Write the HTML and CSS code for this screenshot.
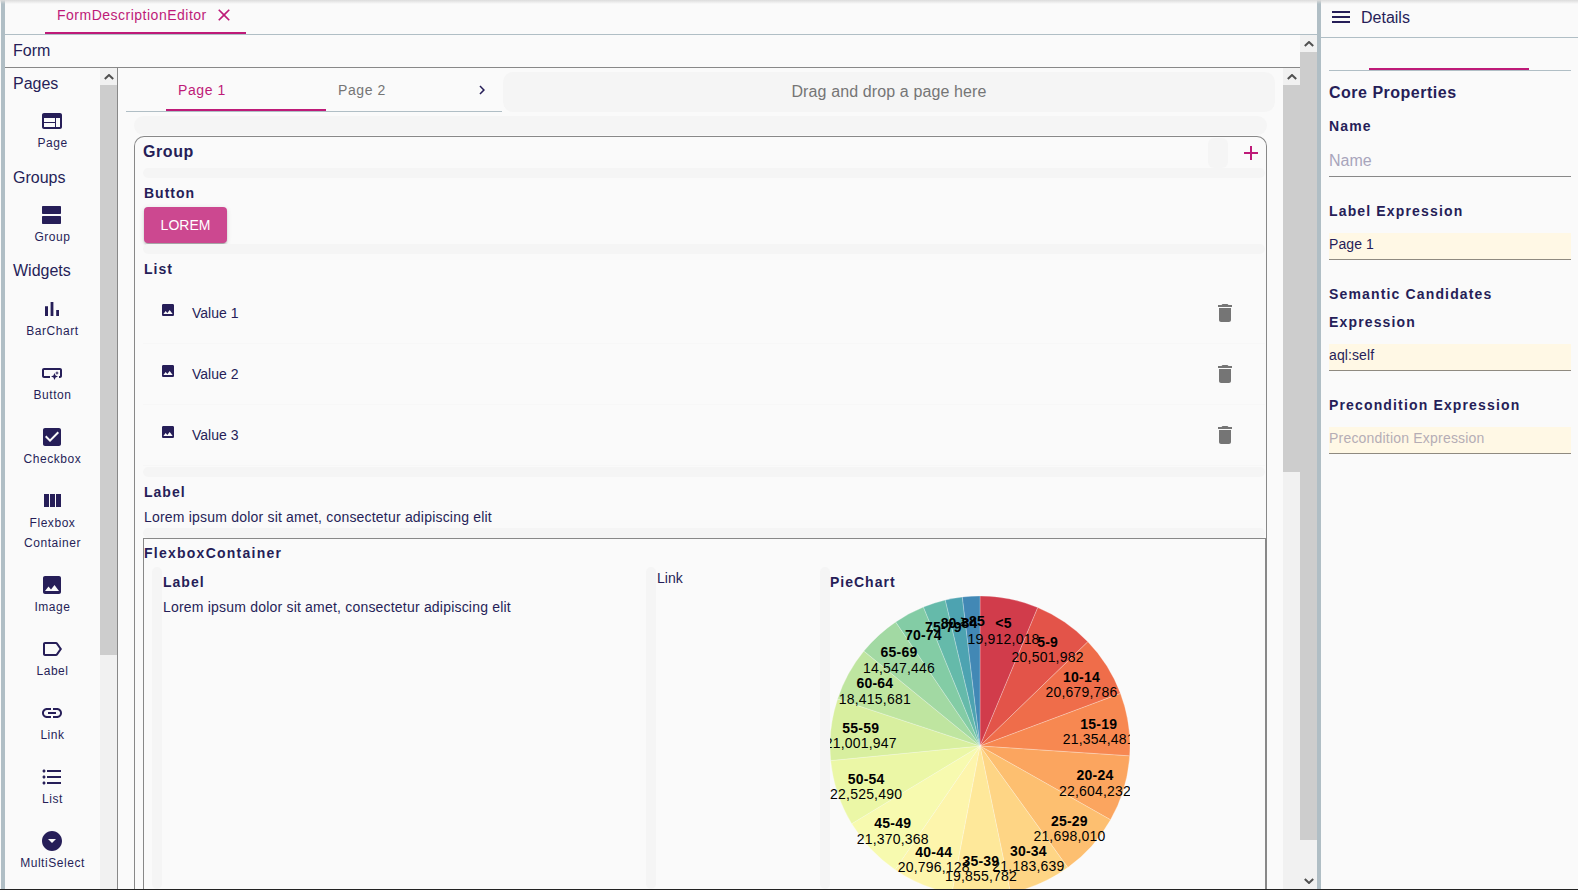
FILE: index.html
```html
<!DOCTYPE html>
<html lang="en">
<head>
<meta charset="utf-8">
<title>FormDescriptionEditor</title>
<link rel="stylesheet" href="styles.css">
</head>
<body>
<div class="app">
  <div class="editor">
    <div class="editor-tabs">
      <div class="editor-tab">
        <span>FormDescriptionEditor</span>
        <svg class="close-icon" viewBox="0 0 24 24"><path d="M19 6.41L17.59 5 12 10.59 6.41 5 5 6.41 10.59 12 5 17.59 6.41 19 12 13.41 17.59 19 19 17.59 13.41 12z"/></svg>
      </div>
    </div>
    <div class="editor-body">
      <div class="form-col">
        <div class="form-title">Form</div>
        <div class="form-row">
          <aside class="palette">
            <div class="palette-list">
              <div class="palette-title nudge">Pages</div>
              <div class="palette-item"><svg class="icon" viewBox="0 0 24 24"><path d="M20 4H4c-1.1 0-1.99.9-1.99 2L2 18c0 1.1.9 2 2 2h16c1.1 0 2-.9 2-2V6c0-1.1-.9-2-2-2zm-5 14H4v-4h11v4zm0-5H4V9h11v4zm5 5h-4V9h4v9z"/></svg><span>Page</span></div>
              <div class="palette-title nudge">Groups</div>
              <div class="palette-item"><svg class="icon" viewBox="0 0 24 24"><path d="M20 13H3c-.55 0-1 .45-1 1v6c0 .55.45 1 1 1h17c.55 0 1-.45 1-1v-6c0-.55-.45-1-1-1zm0-10H3c-.55 0-1 .45-1 1v6c0 .55.45 1 1 1h17c.55 0 1-.45 1-1V4c0-.55-.45-1-1-1z"/></svg><span>Group</span></div>
              <div class="palette-title">Widgets</div>
              <div class="palette-item"><svg class="icon" viewBox="0 0 24 24"><path d="M5 9.2h3V19H5zM10.6 5h2.8v14h-2.8zm5.6 8H19v6h-2.8z"/></svg><span>BarChart</span></div>
              <div class="palette-item"><svg class="icon" viewBox="0 0 24 24"><path d="M22 9v6c0 1.1-.9 2-2 2h-1v-2h1V9H4v6h6v2H4c-1.1 0-2-.9-2-2V9c0-1.1.9-2 2-2h16c1.1 0 2 .9 2 2zm-7.5 10 1.09-2.41L18 15.5l-2.41-1.09L14.5 12l-1.09 2.41L11 15.5l2.41 1.09L14.5 19zm2.5-5 .62-1.38L19 12l-1.38-.62L17 10l-.62 1.38L15 12l1.38.62L17 14z"/></svg><span>Button</span></div>
              <div class="palette-item"><svg class="icon" viewBox="0 0 24 24"><path d="M19 3H5c-1.11 0-2 .9-2 2v14c0 1.1.89 2 2 2h14c1.11 0 2-.9 2-2V5c0-1.1-.89-2-2-2zm-9 14l-5-5 1.41-1.41L10 14.17l7.59-7.59L19 8l-9 9z"/></svg><span>Checkbox</span></div>
              <div class="palette-item two-line"><svg class="icon" viewBox="0 0 24 24"><path d="M10 18h5V5h-5v13zm-6 0h5V5H4v13zM16 5v13h5V5h-5z"/></svg><span>Flexbox<br>Container</span></div>
              <div class="palette-item"><svg class="icon" viewBox="0 0 24 24"><path d="M21 19V5c0-1.1-.9-2-2-2H5c-1.1 0-2 .9-2 2v14c0 1.1.9 2 2 2h14c1.1 0 2-.9 2-2zM8.5 13.5l2.5 3.01L14.5 12l4.5 6H5l3.5-4.5z"/></svg><span>Image</span></div>
              <div class="palette-item"><svg class="icon" viewBox="0 0 24 24"><path d="M17.63 5.84C17.27 5.33 16.67 5 16 5L5 5.01C3.9 5.01 3 5.9 3 7v10c0 1.1.9 1.99 2 1.99L16 19c.67 0 1.27-.33 1.63-.84L22 12l-4.37-6.16zM16 17H5V7h11l3.55 5L16 17z"/></svg><span>Label</span></div>
              <div class="palette-item"><svg class="icon" viewBox="0 0 24 24"><path d="M3.9 12c0-1.71 1.39-3.1 3.1-3.1h4V7H7c-2.76 0-5 2.24-5 5s2.24 5 5 5h4v-1.9H7c-1.71 0-3.1-1.39-3.1-3.1zM8 13h8v-2H8v2zm9-6h-4v1.9h4c1.71 0 3.1 1.39 3.1 3.1s-1.39 3.1-3.1 3.1h-4V17h4c2.76 0 5-2.24 5-5s-2.24-5-5-5z"/></svg><span>Link</span></div>
              <div class="palette-item"><svg class="icon" viewBox="0 0 24 24"><path d="M4 10.5c-.83 0-1.5.67-1.5 1.5s.67 1.5 1.5 1.5 1.5-.67 1.5-1.5-.67-1.5-1.5-1.5zm0-6c-.83 0-1.5.67-1.5 1.5S3.17 7.5 4 7.5 5.5 6.83 5.5 6 4.83 4.5 4 4.5zm0 12c-.83 0-1.5.68-1.5 1.5s.68 1.5 1.5 1.5 1.5-.68 1.5-1.5-.67-1.5-1.5-1.5zM7 19h14v-2H7v2zm0-6h14v-2H7v2zm0-8v2h14V5H7z"/></svg><span>List</span></div>
              <div class="palette-item"><svg class="icon" viewBox="0 0 24 24"><path d="M12 2C6.48 2 2 6.48 2 12s4.48 10 10 10 10-4.48 10-10S17.52 2 12 2zm0 12l-4-4h8l-4 4z"/></svg><span>MultiSelect</span></div>
            </div>
            <div class="scrollbar">
              <div class="sb-btn"><svg viewBox="0 0 10 6"><path d="M0.8 5 5 1l4.2 4"/></svg></div>
              <div class="sb-thumb thumb-palette"></div>
            </div>
          </aside>
          <main class="main">
            <div class="main-content">
              <div class="page-bar">
                <div class="page-tabs">
                  <div class="page-tab active">Page 1</div>
                  <div class="page-tab">Page 2</div>
                  <svg class="tab-next" viewBox="0 0 24 24"><path d="M10 6L8.59 7.41 13.17 12l-4.58 4.59L10 18l6-6z"/></svg>
                </div>
                <div class="page-drop">Drag and drop a page here</div>
              </div>
              <div class="drop drop-page"></div>
              <section class="group">
                <div class="group-head">
                  <div class="group-title">Group</div>
                  <div class="drop-head"></div>
                  <svg class="add-icon" viewBox="0 0 24 24"><path d="M19 13h-6v6h-2v-6H5v-2h6V5h2v6h6v2z"/></svg>
                </div>
                <div class="drop drop-bar"></div>
                <div class="w-label">Button</div>
                <div class="lorem-btn">LOREM</div>
                <div class="drop drop-bar drop-after-btn"></div>
                <div class="w-label">List</div>
                <div class="list">
                  <div class="list-row">
                    <svg class="row-image" viewBox="0 0 24 24"><path d="M21 19V5c0-1.1-.9-2-2-2H5c-1.1 0-2 .9-2 2v14c0 1.1.9 2 2 2h14c1.1 0 2-.9 2-2zM8.5 13.5l2.5 3.01L14.5 12l4.5 6H5l3.5-4.5z"/></svg>
                    <span class="row-text">Value 1</span>
                    <svg class="row-delete" viewBox="0 0 24 24"><path d="M6 19c0 1.1.9 2 2 2h8c1.1 0 2-.9 2-2V7H6v12zM19 4h-3.5l-1-1h-5l-1 1H5v2h14V4z"/></svg>
                  </div>
                  <div class="list-row">
                    <svg class="row-image" viewBox="0 0 24 24"><path d="M21 19V5c0-1.1-.9-2-2-2H5c-1.1 0-2 .9-2 2v14c0 1.1.9 2 2 2h14c1.1 0 2-.9 2-2zM8.5 13.5l2.5 3.01L14.5 12l4.5 6H5l3.5-4.5z"/></svg>
                    <span class="row-text">Value 2</span>
                    <svg class="row-delete" viewBox="0 0 24 24"><path d="M6 19c0 1.1.9 2 2 2h8c1.1 0 2-.9 2-2V7H6v12zM19 4h-3.5l-1-1h-5l-1 1H5v2h14V4z"/></svg>
                  </div>
                  <div class="list-row">
                    <svg class="row-image" viewBox="0 0 24 24"><path d="M21 19V5c0-1.1-.9-2-2-2H5c-1.1 0-2 .9-2 2v14c0 1.1.9 2 2 2h14c1.1 0 2-.9 2-2zM8.5 13.5l2.5 3.01L14.5 12l4.5 6H5l3.5-4.5z"/></svg>
                    <span class="row-text">Value 3</span>
                    <svg class="row-delete" viewBox="0 0 24 24"><path d="M6 19c0 1.1.9 2 2 2h8c1.1 0 2-.9 2-2V7H6v12zM19 4h-3.5l-1-1h-5l-1 1H5v2h14V4z"/></svg>
                  </div>
                </div>
                <div class="drop drop-bar drop-after-list"></div>
                <div class="w-label">Label</div>
                <div class="w-text">Lorem ipsum dolor sit amet, consectetur adipiscing elit</div>
                <div class="drop drop-bar drop-tight"></div>
                <div class="flexbox">
                  <div class="w-label flex-title">FlexboxContainer</div>
                  <div class="flex-cols">
                    <div class="drop col-drop"></div>
                    <div class="flex-col col-label">
                      <div class="w-label">Label</div>
                      <div class="w-text">Lorem ipsum dolor sit amet, consectetur adipiscing elit</div>
                    </div>
                    <div class="drop col-drop"></div>
                    <div class="flex-col col-link">Link</div>
                    <div class="drop col-drop"></div>
                    <div class="flex-col col-pie">
                      <div class="w-label pie-title">PieChart</div>
                      <svg id="pie" class="pie" viewBox="-150 -150 300 300" width="300" height="300"></svg>
                    </div>
                  </div>
                </div>
              </section>
            </div>
            <div class="scrollbar">
              <div class="sb-btn"><svg viewBox="0 0 10 6"><path d="M0.8 5 5 1l4.2 4"/></svg></div>
              <div class="sb-thumb thumb-main"></div>
            </div>
          </main>
        </div>
      </div>
      <div class="scrollbar">
        <div class="sb-btn"><svg viewBox="0 0 10 6"><path d="M0.8 5 5 1l4.2 4"/></svg></div>
        <div class="sb-thumb thumb-outer"></div>
        <div class="sb-fill"></div>
        <div class="sb-btn"><svg viewBox="0 0 10 6"><path d="M0.8 1 5 5l4.2-4"/></svg></div>
      </div>
    </div>
  </div>
  <aside class="details">
    <div class="details-head">
      <svg class="icon" viewBox="0 0 24 24"><path d="M3 18h18v-2H3v2zm0-5h18v-2H3v2zm0-7v2h18V6H3z"/></svg>
      <span>Details</span>
    </div>
    <div class="details-body">
      <div class="details-tabs"><div class="details-tab"></div></div>
      <div class="core-title">Core Properties</div>
      <div class="field-label first">Name</div>
      <div class="input-plain">Name</div>
      <div class="field-label">Label Expression</div>
      <div class="input-expr">Page 1</div>
      <div class="field-label wrap">Semantic Candidates Expression</div>
      <div class="input-expr tight">aql:self</div>
      <div class="field-label">Precondition Expression</div>
      <div class="input-expr empty">Precondition Expression</div>
    </div>
  </aside>
</div>
<script src="pie.js"></script>
</body>
</html>
```
FILE: styles.css
```css
* { box-sizing: border-box; }
html, body { margin: 0; height: 100%; overflow: hidden; }
body {
  background: #fafafa;
  color: #261e58;
  font-family: "Liberation Sans", Arial, sans-serif;
  font-size: 14px;
}
.app {
  position: relative;
  display: flex;
  height: 890px;
  padding-left: 1px;
  border-bottom: 1px solid #222;
  overflow: hidden;
}
.app::before {
  content: "";
  position: absolute;
  inset: 0 0 auto 0;
  height: 4px;
  background: linear-gradient(#dcdcdc, rgba(250, 250, 250, 0));
  z-index: 3;
}
.icon { width: 24px; height: 24px; fill: #261e58; display: block; flex: none; }

/* editor */
.editor {
  width: 1320px;
  flex: none;
  display: flex;
  flex-direction: column;
  border-left: 4px solid #b0bec5;
  border-right: 4px solid #b0bec5;
  min-height: 0;
}
.editor-tabs { height: 35px; flex: none; padding-left: 40px; border-bottom: 1px solid #b0bec5; }
.editor-tab {
  width: 201px;
  height: 34px;
  padding: 0 0 2px 12px;
  display: flex;
  align-items: center;
  gap: 7px;
  color: #be1a78;
  letter-spacing: 0.5px;
  border-bottom: 2px solid #be1a78;
}
.close-icon { width: 20px; height: 20px; fill: #be1a78; }
.editor-body { flex: 1; display: flex; min-height: 0; }
.form-col { flex: 1; min-width: 0; display: flex; flex-direction: column; }
.form-title {
  height: 33px;
  flex: none;
  padding: 4px 0 0 8px;
  font-size: 16px;
  line-height: 24px;
  border-bottom: 1px solid #888;
}
.form-row { flex: 1; min-height: 0; display: flex; }

/* scrollbars */
.scrollbar { width: 17px; flex: none; display: flex; flex-direction: column; background: #f1f1f1; }
.sb-btn { height: 17px; flex: none; display: flex; align-items: center; justify-content: center; }
.sb-btn svg { width: 10px; height: 6px; fill: none; stroke: #505050; stroke-width: 2; }
.sb-thumb { background: #cdcdcd; flex: none; }
.thumb-palette { height: 570px; }
.thumb-main { height: 387px; }
.thumb-outer { height: 788px; }
.sb-fill { flex: 1; }

/* palette */
.palette { width: 113px; flex: none; display: flex; border-right: 1px solid #888; }
.palette-list { flex: 1; min-width: 0; padding-top: 3px; overflow: hidden; }
.palette-title { padding-left: 8px; font-size: 16px; line-height: 24px; margin-bottom: 14px; }
.palette-title.nudge { padding-top: 1px; margin-bottom: 13px; }
.palette-item {
  display: flex;
  flex-direction: column;
  align-items: center;
  text-align: center;
  margin-bottom: 19px;
  font-size: 12px;
  line-height: 19.92px;
  letter-spacing: 0.55px;
}
.palette-item .icon { margin-right: 1px; }
.palette-item span { padding-top: 1px; }
.palette-item.two-line { margin-bottom: 20px; }
.palette-item + .palette-title { margin-top: -8px; }

/* main */
.main { flex: 1; min-width: 0; display: flex; }
.main-content { flex: 1; min-width: 0; padding: 0 8px; display: flex; flex-direction: column; }
.page-bar { height: 44px; flex: none; display: flex; }
.page-tabs {
  position: relative;
  width: 376px;
  flex: none;
  padding-left: 40px;
  display: flex;
  border-bottom: 1px solid #b0bec5;
  overflow: hidden;
}
.page-tab {
  width: 160px;
  flex: none;
  padding: 14px 0 0 12px;
  line-height: 17px;
  letter-spacing: 0.6px;
  color: #757575;
}
.page-tab.active { color: #be1a78; border-bottom: 2px solid #be1a78; }
.tab-next { position: absolute; right: 11px; top: 13px; width: 18px; height: 18px; fill: #261e58; }
.page-drop {
  flex: 1;
  margin: 4px 0 0 1px;
  border-radius: 10px;
  background: #f5f5f5;
  color: #757575;
  font-size: 16px;
  letter-spacing: 0.12px;
  line-height: 40px;
  text-align: center;
}
.drop { background: #f5f5f5; border-radius: 10px; flex: none; }
.drop-page { height: 19px; margin: 4px 8px 1px; }
.group {
  flex: 1;
  min-height: 0;
  margin: 0 8px;
  padding: 0 1px 0 8px;
  border: 1px solid #888;
  border-bottom: 0;
  border-radius: 10px 10px 0 0;
  display: flex;
  flex-direction: column;
}
.group-head { height: 31px; flex: none; display: flex; }
.group-title { flex: 1; font-size: 16px; font-weight: 700; letter-spacing: 0.6px; line-height: 30px; }
.drop-head { width: 20px; height: 30px; margin: 1px 11px 0 0; border-radius: 6px; background: #f5f5f5; }
.add-icon { width: 24px; height: 24px; fill: #be1a78; margin: 4px 2px 0 0; }
.drop-bar { height: 10px; }
.w-label { height: 20px; margin-top: 5px; padding-left: 1px; font-weight: 700; letter-spacing: 1px; line-height: 20px; flex: none; }
.lorem-btn {
  width: 83px;
  height: 36px;
  margin: 4px 0 0 1px;
  flex: none;
  border-radius: 4px;
  background: #cc4890;
  color: #fff;
  line-height: 36px;
  text-align: center;
  box-shadow: 0 3px 1px -2px rgba(0,0,0,.2), 0 2px 2px 0 rgba(0,0,0,.14), 0 1px 5px 0 rgba(0,0,0,.12);
}
.drop-after-btn { margin-top: 1px; }
.list { margin-top: 4px; flex: none; }
.list-row { height: 61px; display: flex; align-items: center; padding: 0 28px 0 17px; border-bottom: 1px solid #f7f7f7; }
.row-image { width: 16px; height: 16px; fill: #261e58; margin-bottom: 6px; flex: none; }
.row-text { flex: 1; margin-left: 16px; }
.row-delete { width: 24px; height: 24px; fill: #757575; flex: none; }
.drop-after-list { margin-top: 1px; }
.w-text { height: 22px; margin-top: 4px; padding-left: 1px; line-height: 22px; flex: none; letter-spacing: 0.2px; white-space: nowrap; }
.flexbox { flex: 1; min-height: 0; border: 1px solid #888; border-bottom: 0; display: flex; flex-direction: column; margin-right: -1px; }
.flex-title { margin-top: 4px; padding-left: 0; letter-spacing: 1.25px; }
.flex-cols { flex: 1; min-height: 0; margin-top: 4px; display: flex; padding-left: 8px; }
.col-drop { width: 10px; }
.flex-col { flex: none; }
.col-label { width: 484px; }
.col-label .w-label { margin-top: 5px; }
.col-link { width: 164px; padding: 0 0 0 1px; line-height: 22px; }
.col-pie { width: 320px; }
.pie-title { margin-top: 5px; padding-left: 0; }
.pie { display: block; margin-top: 4px; overflow: hidden; }
.pie text { font-family: "Liberation Sans", Arial, sans-serif; font-size: 14px; fill: #000; text-anchor: middle; letter-spacing: 0.2px; }
.pie .name { font-weight: 700; }

/* details */
.details { flex: 1; min-width: 0; display: flex; flex-direction: column; }
.details-head {
  height: 38px;
  flex: none;
  padding: 5px 0 0 8px;
  display: flex;
  align-items: flex-start;
  gap: 8px;
  font-size: 16px;
  line-height: 24px;
  border-bottom: 1px solid #b0bec5;
}
.details-head span { padding-top: 1px; }
.details-body { padding: 0 7px 0 8px; }
.details-tabs { height: 33px; padding: 30px 0 0 40px; border-bottom: 1px solid #b0bec5; }
.details-tab { width: 160px; height: 2px; background: #be1a78; }
.core-title { margin-top: 10px; font-size: 16px; font-weight: 700; letter-spacing: 0.5px; line-height: 24px; }
.field-label { margin-top: 24px; font-weight: 700; letter-spacing: 1.15px; line-height: 20px; }
.field-label.first { margin-top: 11px; }
.field-label.wrap { margin-top: 20px; line-height: 28px; width: 190px; }
.input-plain { height: 41px; padding-top: 14px; font-size: 16px; line-height: 22px; color: #a8a5bc; border-bottom: 1px solid #888; }
.input-expr { height: 27px; margin-top: 12px; padding-top: 0; line-height: 22px; letter-spacing: 0.1px; background: #fff8e5; border-bottom: 1px solid #8f8a80; }
.input-expr.tight { margin-top: 8px; }
.input-expr.empty { color: #b5adb5; letter-spacing: 0.2px; }
```
FILE: pie.js
```js
(function () {
  var data = [
    ["<5", 19912018], ["5-9", 20501982], ["10-14", 20679786], ["15-19", 21354481],
    ["20-24", 22604232], ["25-29", 21698010], ["30-34", 21183639], ["35-39", 19855782],
    ["40-44", 20796128], ["45-49", 21370368], ["50-54", 22525490], ["55-59", 21001947],
    ["60-64", 18415681], ["65-69", 14547446], ["70-74", 10587721], ["75-79", 7730129],
    ["80-84", 5811429], ["\u226585", 5938960]
  ];
  var scheme = ["9e0142", "d53e4f", "f46d43", "fdae61", "fee08b", "ffffbf", "e6f598", "abdda4", "66c2a5", "3288bd", "5e4fa2"];
  var channels = [0, 2, 4].map(function (o) {
    return scheme.map(function (h) { return parseInt(h.substr(o, 2), 16); });
  });
  function basis(values, t) {
    var n = values.length - 1;
    var i = t >= 1 ? n - 1 : Math.floor(t * n);
    var v1 = values[i], v2 = values[i + 1];
    var v0 = i > 0 ? values[i - 1] : 2 * v1 - v2;
    var v3 = i < n - 1 ? values[i + 2] : 2 * v2 - v1;
    var t1 = (t - i / n) * n, t2 = t1 * t1, t3 = t2 * t1;
    return ((1 - 3 * t1 + 3 * t2 - t3) * v0 + (4 - 6 * t2 + 3 * t3) * v1 +
      (1 + 3 * t1 + 3 * t2 - 3 * t3) * v2 + t3 * v3) / 6;
  }
  function spectral(t) {
    return "rgb(" + channels.map(function (c) {
      return Math.max(0, Math.min(255, Math.round(basis(c, t))));
    }).join(",") + ")";
  }
  var NS = "http://www.w3.org/2000/svg";
  var svg = document.getElementById("pie");
  var total = data.reduce(function (s, d) { return s + d[1]; }, 0);
  var R = 150, LR = 120, a = 0, labels = [];
  data.forEach(function (d, i) {
    var span = d[1] / total * 2 * Math.PI, b = a + span, mid = a + span / 2;
    var p = document.createElementNS(NS, "path");
    p.setAttribute("d", "M0 0L" + R * Math.sin(a) + " " + -R * Math.cos(a) +
      "A" + R + " " + R + " 0 0 1 " + R * Math.sin(b) + " " + -R * Math.cos(b) + "Z");
    p.setAttribute("fill", spectral(i / (data.length - 1) * 0.8 + 0.1));
    p.setAttribute("stroke", "#fff");
    p.setAttribute("stroke-width", "0.25");
    svg.appendChild(p);
    labels.push({ x: LR * Math.sin(mid), y: -LR * Math.cos(mid), name: d[0], value: d[1], big: span > 0.25 });
    a = b;
  });
  labels.forEach(function (l) {
    var g = document.createElementNS(NS, "text");
    g.setAttribute("transform", "translate(" + l.x + "," + l.y + ")");
    var n = document.createElementNS(NS, "tspan");
    n.setAttribute("class", "name");
    n.setAttribute("x", "0");
    n.setAttribute("y", "0");
    n.textContent = l.name;
    g.appendChild(n);
    if (l.big) {
      var v = document.createElementNS(NS, "tspan");
      v.setAttribute("x", "0");
      v.setAttribute("y", "1.1em");
      v.textContent = l.value.toLocaleString("en-US");
      g.appendChild(v);
    }
    svg.appendChild(g);
  });
})();
```
